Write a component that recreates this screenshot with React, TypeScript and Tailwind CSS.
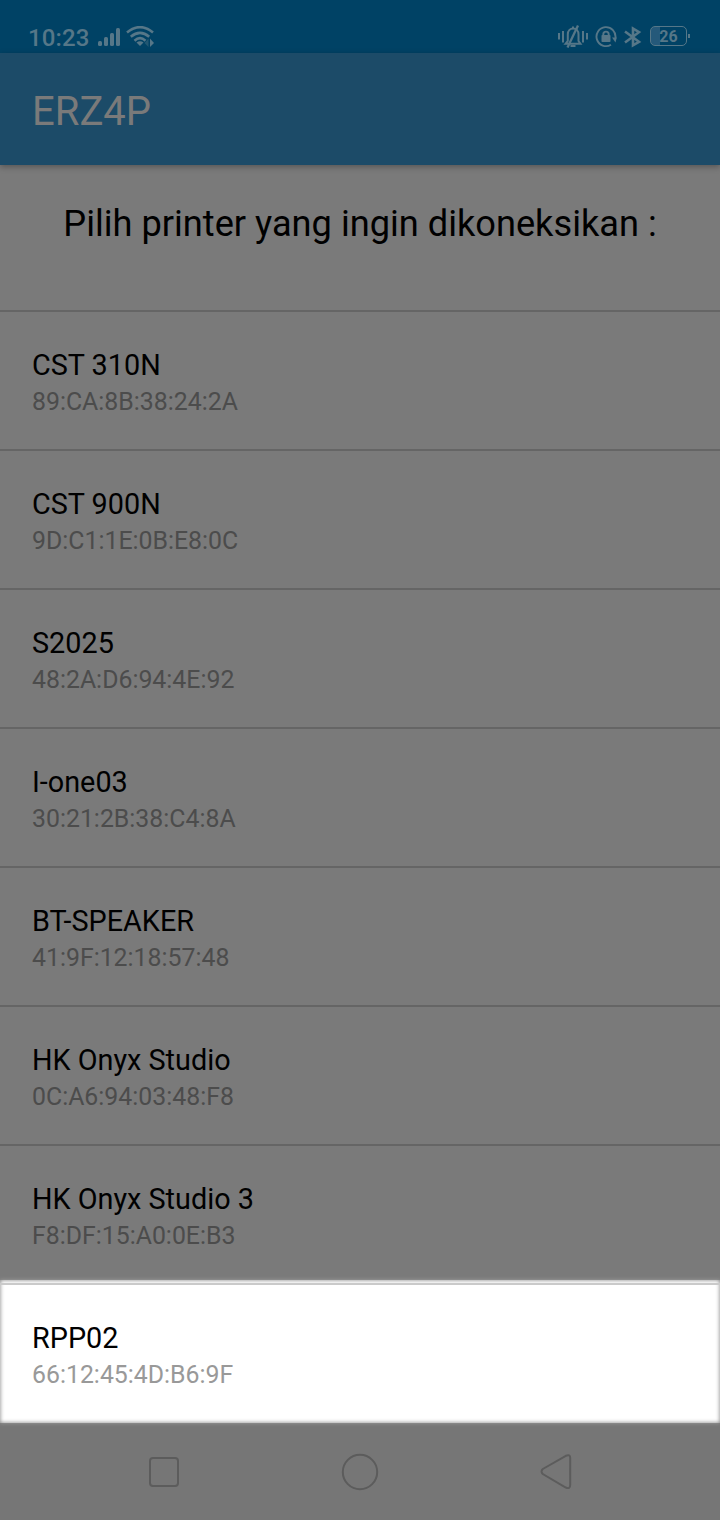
interface IPrinter {
  name: string;
  address: string;
}

const printers: IPrinter[] = [
  { name: "CST 310N", address: "89:CA:8B:38:24:2A" },
  { name: "CST 900N", address: "9D:C1:1E:0B:E8:0C" },
  { name: "S2025", address: "48:2A:D6:94:4E:92" },
  { name: "I-one03", address: "30:21:2B:38:C4:8A" },
  { name: "BT-SPEAKER", address: "41:9F:12:18:57:48" },
  { name: "HK Onyx Studio", address: "0C:A6:94:03:48:F8" },
  { name: "HK Onyx Studio 3", address: "F8:DF:15:A0:0E:B3" },
];

const SignalIcon = () => (
  <svg className="w-[23px] h-[19px]" viewBox="0 0 23 19" fill="currentColor">
    <rect x="0" y="13" width="4" height="5" rx="1.5" />
    <rect x="6" y="9" width="4" height="9" rx="1.5" />
    <rect x="12" y="5" width="4" height="13" rx="1.5" />
    <rect x="18" y="0" width="4" height="18" rx="1.5" />
  </svg>
);

const WifiIcon = () => (
  <svg className="w-[30px] h-[22px]" viewBox="0 0 30 22" fill="none" stroke="currentColor" strokeWidth="2.6">
    <path d="M1 6.5Q14 -4.2 27 6.5" />
    <path d="M4.8 10.7Q14 3 23.2 10.7" />
    <path d="M8.5 14.7Q14 9.7 19.5 14.7" />
    <path d="M10.5 16.5Q14 14 17.5 16.5L14 20Z" fill="currentColor" stroke="none" />
    <path d="M22.5 12.5V21L18.5 17Z" fill="currentColor" stroke="none" opacity="0.4" />
    <path d="M24 12.5V21L28 17Z" fill="currentColor" stroke="none" />
  </svg>
);

const MutedBellIcon = () => (
  <svg className="w-[30px] h-[24px]" viewBox="0 0 30 24" fill="none" stroke="currentColor" strokeWidth="2">
    <path d="M1 8V14.5M5 6V17.5M25 6V17.5M29 8V14.5" />
    <path d="M7.5 18.8L9.8 16V9.5C9.8 1.5 20.5 1.5 20.5 9.5V16L22.5 18.8H7.5ZM15 3.5V1.5M12.5 21H17.5" />
    <path d="M9.5 22.5L20 0.5" strokeWidth="2.3" />
  </svg>
);

const RotationLockIcon = () => (
  <svg className="w-[22px] h-[22px]" viewBox="0 0 22 22" fill="none" stroke="currentColor" strokeWidth="1.9">
    <path d="M16 18.7A9.5 9.5 0 1 1 20.4 12" />
    <path d="M17 11.5L21.8 11.5L20.5 16.5Z" fill="currentColor" stroke="none" />
    <rect x="6.5" y="9" width="9" height="7" rx="0.8" fill="currentColor" stroke="none" />
    <path d="M8.3 9.5V8.2C8.3 4.8 13.7 4.8 13.7 8.2V9.5" />
  </svg>
);

const BluetoothIcon = () => (
  <svg className="w-[18px] h-[22px]" viewBox="0 0 18 22" fill="none" stroke="currentColor" strokeWidth="2.6">
    <path d="M1 5.5L15 15.8L9 19.3V2.5L15 6.2L1 16.5" />
  </svg>
);

const StatusBar = () => (
  <div className="h-[53px] bg-[#004265] text-[#567788] flex items-start shrink-0">
    <span className="ml-[28px] mt-[22px] w-[70px] text-[24px] leading-[32px] tracking-[0.1px] font-medium">
      10:23
    </span>
    <div className="mt-[28px]">
      <SignalIcon />
    </div>
    <div className="mt-[26px] ml-[5px]">
      <WifiIcon />
    </div>
    <div className="ml-auto mr-[30px] mt-[25px] flex items-start">
      <MutedBellIcon />
      <div className="ml-[7px] mt-[1px]">
        <RotationLockIcon />
      </div>
      <div className="ml-[7px] mt-[1px]">
        <BluetoothIcon />
      </div>
      <div className="ml-[8px] mt-[1px] flex items-center">
        <div className="w-[37px] h-[20px] pt-px border border-[#567788] rounded-[5px] bg-linear-to-r from-[#25597a] from-26% to-transparent to-26% flex items-center justify-center text-[16px] leading-none font-bold">
          26
        </div>
        <div className="w-[2px] h-[4px] ml-px bg-[#567788]" />
      </div>
    </div>
  </div>
);

const PrinterRow = ({ name, address }: IPrinter) => (
  <div className="h-[139px] border-t-2 border-[#656565] px-8 pt-[34px] shrink-0">
    <div className="text-[28.8px] leading-[38px] text-black">{name}</div>
    <div className="mt-px text-[24.85px] leading-[34px] text-[#4c4c4c]">{address}</div>
  </div>
);

export default function App() {
  return (
    <div className="w-[720px] h-[1520px] bg-[#7a7a7a] flex flex-col overflow-hidden font-['Roboto',sans-serif]">
      <StatusBar />
      <header className="h-[112px] bg-[#1c4b68] shadow-[0_2px_6px_rgba(0,0,0,0.3)] flex items-center px-8 shrink-0">
        <h1 className="text-[40px] leading-[48px] text-[#7a7a7a] mt-1.5">ERZ4P</h1>
      </header>
      <div className="h-[145px] pt-[35px] text-center text-[36.2px] leading-[48px] text-black shrink-0">
        Pilih printer yang ingin dikoneksikan :
      </div>

      <main className="flex flex-col shrink-0">
        {printers.map((printer) => (
          <PrinterRow key={printer.address} {...printer} />
        ))}
      </main>

      {/* highlighted row, soft inner edge against the dimmed page */}
      <section className="relative -mt-[3px] h-[143px] bg-white shadow-[inset_0_0_4px_#7a7a7a,0_0_4px_#a0a0a0] pt-[3px] shrink-0">
        <div className="h-[2px] bg-[#cacaca]" />
        <div className="px-8 pt-[34px]">
          <div className="text-[28.8px] leading-[38px] text-black">RPP02</div>
          <div className="mt-px text-[24.85px] leading-[34px] text-[#999999]">66:12:45:4D:B6:9F</div>
        </div>
      </section>

      <nav className="flex-1 bg-[#767676] text-[#5c5c5c] flex items-center justify-center">
        <svg className="w-[424px] h-[40px]" viewBox="0 0 424 40" fill="none" stroke="currentColor" strokeWidth="2">
          <rect x="2" y="6" width="28" height="28" rx="3" />
          <circle cx="212" cy="20" r="17.2" />
          <path d="M394.8 17L417.8 3.8Q422.2 2 422.2 6V33Q422.2 37.5 417.8 35.5L394.8 22Q392.3 19.5 394.8 17Z" />
        </svg>
      </nav>
    </div>
  );
}
